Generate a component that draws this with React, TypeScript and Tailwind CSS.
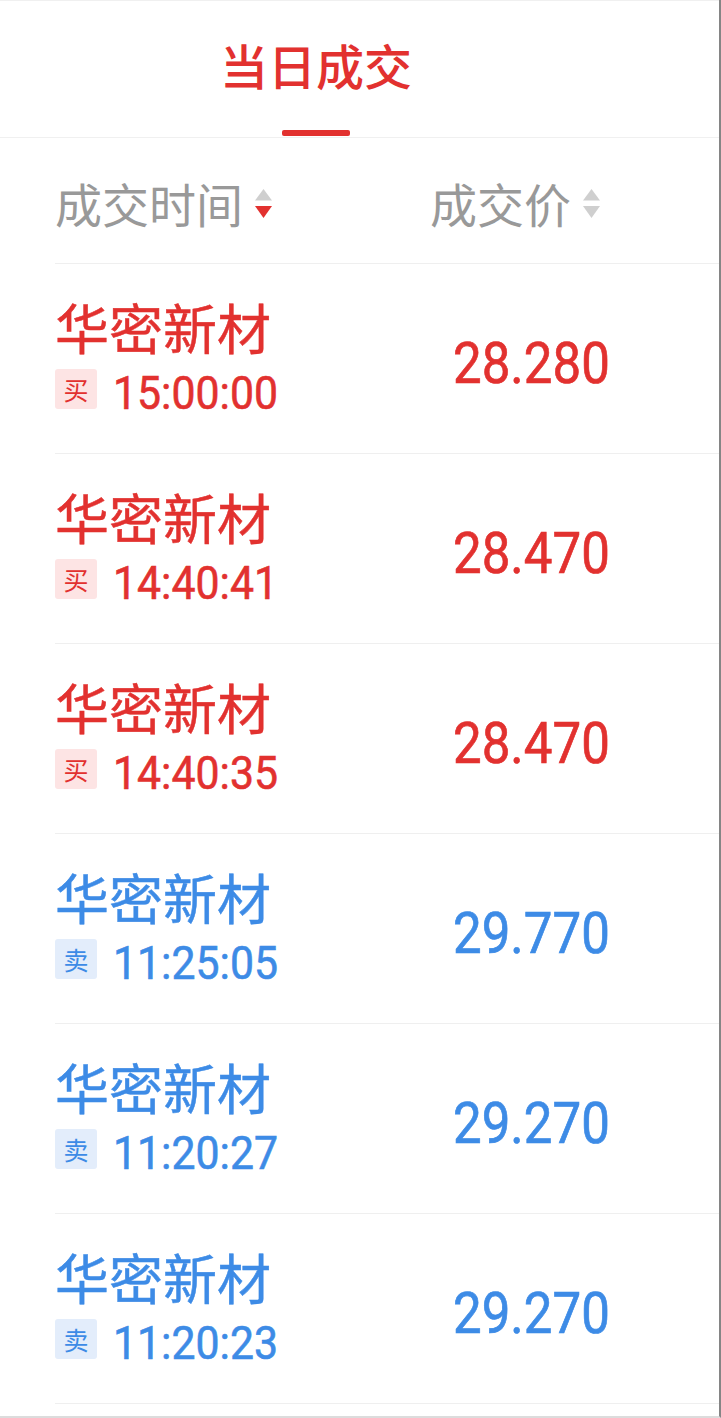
import React from "react";

type Trade = {
  name: string;
  time: string;
  price: string;
  side: "buy" | "sell";
};

const trades: Trade[] = [
  { name: "华密新材", time: "15:00:00", price: "28.280", side: "buy" },
  { name: "华密新材", time: "14:40:41", price: "28.470", side: "buy" },
  { name: "华密新材", time: "14:40:35", price: "28.470", side: "buy" },
  { name: "华密新材", time: "11:25:05", price: "29.770", side: "sell" },
  { name: "华密新材", time: "11:20:27", price: "29.270", side: "sell" },
  { name: "华密新材", time: "11:20:23", price: "29.270", side: "sell" },
];

const cjk = "font-['Noto_Sans_CJK_SC','Noto_Sans',sans-serif]";
const num = "font-['Roboto','Noto_Sans_CJK_SC',sans-serif]";

const SortIcon = ({ active }: { active?: boolean }) => (
  <svg width="19" height="32" viewBox="0 0 19 32" className="ml-[11px] mt-[2px]">
    <path d="M9.5 1 L18 12.5 L1 12.5 Z" fill="#cfcfcf" />
    <path d="M1 18 L18 18 L9.5 30 Z" fill={active ? "#e2312f" : "#cfcfcf"} />
  </svg>
);

const TradeRow = ({ trade }: { trade: Trade }) => {
  const buy = trade.side === "buy";
  const color = buy ? "text-[#e2312f]" : "text-[#3d8be6]";

  return (
    <div className="ml-[55px] flex h-[190px] border-b border-[#efefef]">
      <div className="w-[375px] pt-[36px]">
        <div className={`${cjk} ${color} text-[54px] leading-[54px] [-webkit-text-stroke:0.5px_currentColor]`}>
          {trade.name}
        </div>
        <div className="mt-[15px] flex items-start">
          <span
            className={`${cjk} flex h-[40px] w-[42px] items-center justify-center rounded-[3px] text-[25px] leading-none ${
              buy ? "bg-[#fde4e4] text-[#e2312f]" : "bg-[#e3edfb] text-[#3d8be6]"
            }`}
          >
            {buy ? "买" : "卖"}
          </span>
          <span
            className={`${num} ${color} ml-[16px] mt-[1px] inline-block origin-left scale-x-[0.93] text-[46px] leading-none [-webkit-text-stroke:0.6px_currentColor]`}
          >
            {trade.time}
          </span>
        </div>
      </div>
      <div className="pl-[23px] pt-[70px]">
        <span
          className={`${num} ${color} inline-block origin-left scale-x-[0.88] text-[58px] leading-none [-webkit-text-stroke:0.7px_currentColor]`}
        >
          {trade.price}
        </span>
      </div>
    </div>
  );
};

export default function App() {
  return (
    <div className="h-[1418px] w-[721px] overflow-hidden border-b-2 border-r-2 border-b-[#dcdcdc] border-r-[#858585] bg-white">
      <div className="h-[138px] border-b border-t border-[#f0f0f0]">
        <div className="ml-[220px] flex w-[192px] flex-col items-center pt-[39px]">
          <span className={`${cjk} text-[48px] font-medium leading-[48px] text-[#e2312f]`}>当日成交</span>
          <span className="mt-[42px] h-[6px] w-[68px] rounded-[2px] bg-[#e2312f]" />
        </div>
      </div>

      <div className="ml-[55px] flex h-[126px] items-center border-b border-[#efefef] pt-[4px]">
        <div className="flex w-[375px] items-center">
          <span className={`${cjk} text-[47px] leading-none text-[#999999]`}>成交时间</span>
          <SortIcon active />
        </div>
        <div className="flex items-center">
          <span className={`${cjk} text-[47px] leading-none text-[#999999]`}>成交价</span>
          <SortIcon />
        </div>
      </div>

      {trades.map((t, i) => (
        <TradeRow key={i} trade={t} />
      ))}
    </div>
  );
}
